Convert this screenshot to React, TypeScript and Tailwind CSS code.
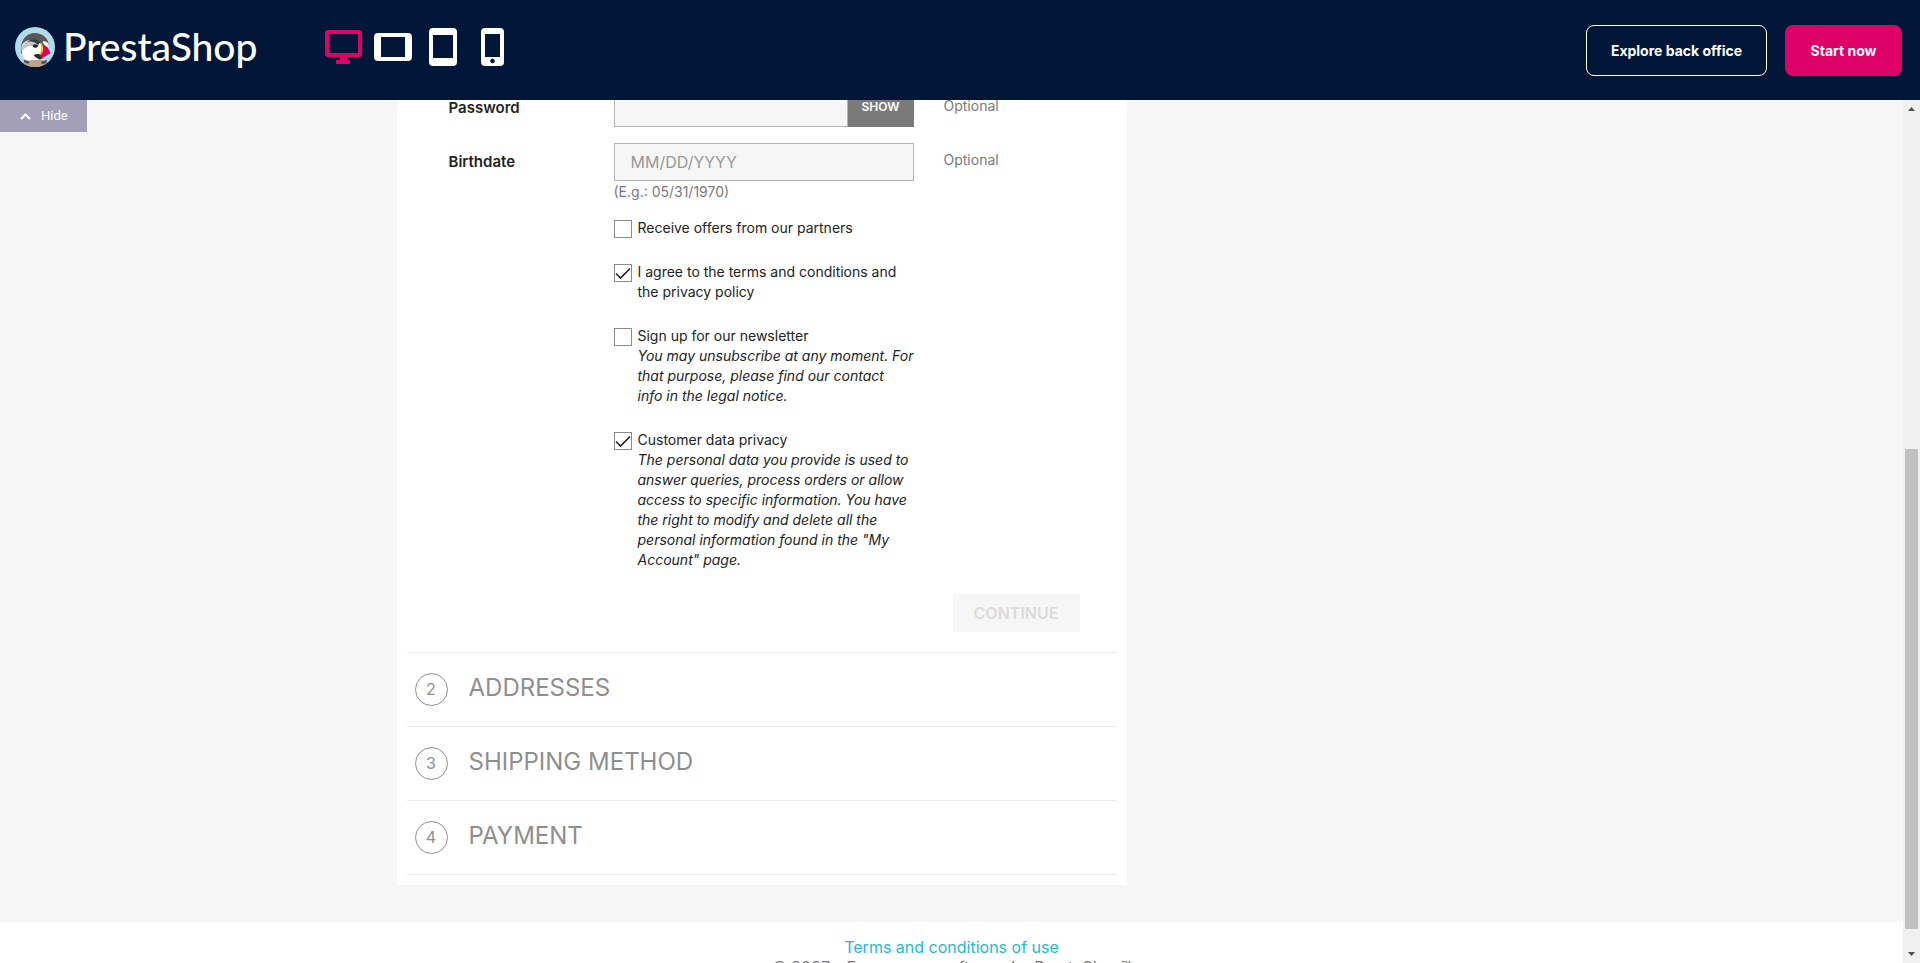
import type { ReactNode } from "react";

function PuffinLogo() {
  return (
    <svg viewBox="0 0 120 120" className="size-10 shrink-0" aria-hidden="true">
      <defs>
        <clipPath id="badge">
          <circle cx="60" cy="60" r="60" />
        </clipPath>
      </defs>
      <g clipPath="url(#badge)">
        <rect width="120" height="120" fill="#b0dcea" />
        <path d="M18 78C14 42 32 18 60 18C82 18 100 34 101 54L96 84L60 104Z" fill="#58585a" />
        <path d="M20 56C28 40 48 36 66 42L78 62L74 96C62 104 42 106 32 98C22 90 18 72 20 56Z" fill="#fff" />
        <path d="M20 62C24 44 44 36 62 42C70 46 72 54 66 60C52 54 34 56 20 72Z" fill="#c4c6c8" />
        <path d="M36 44C52 32 74 36 82 54L74 62C70 50 58 42 36 44Z" fill="#3b3b3d" />
        <path d="M82 44C92 40 102 46 102 62L92 60Z" fill="#f4f4f4" />
        <ellipse cx="61" cy="57" rx="8" ry="5" fill="#1d1d1b" />
        <path d="M73 48C64 66 64 82 80 96C84 88 86 78 84 68C84 58 80 50 73 48Z" fill="#fff" />
        <path d="M75 46C86 52 90 66 82 92C78 88 74 84 74 80C80 70 80 56 75 46Z" fill="#f9c80e" />
        <path d="M56 84C64 80 72 80 82 86L80 96C72 98 62 94 56 84Z" fill="#2b2b2b" />
        <path d="M81 53C94 54 104 66 106 80C98 82 88 88 80 97C76 90 76 84 82 76C86 68 86 60 81 53Z" fill="#df0067" />
        <path d="M28 104C48 98 74 98 94 103L92 120H28Z" fill="#bda587" />
        <path d="M28 98L44 104L40 110L26 106ZM78 104L96 98L94 108L80 112Z" fill="#5b5048" />
      </g>
    </svg>
  );
}

function DesktopIcon() {
  return (
    <svg viewBox="0 0 38 38" className="size-[38px]" fill="currentColor" aria-hidden="true">
      <path
        fillRule="evenodd"
        d="M3 2H34a3 3 0 0 1 3 3V26a3 3 0 0 1-3 3H22v3h3v4H11v-4h4v-3H3a3 3 0 0 1-3-3V5a3 3 0 0 1 3-3ZM4 6V25H33V6Z"
      />
    </svg>
  );
}

function TabletLandscapeIcon() {
  return (
    <svg viewBox="0 0 38 38" className="size-[38px]" fill="currentColor" aria-hidden="true">
      <path fillRule="evenodd" d="M4 5H34a4 4 0 0 1 4 4V29a4 4 0 0 1-4 4H4a4 4 0 0 1-4-4V9a4 4 0 0 1 4-4ZM7 9V29H31V9Z" />
    </svg>
  );
}

function TabletIcon() {
  return (
    <svg viewBox="0 0 28 38" className="h-[38px] w-7" fill="currentColor" aria-hidden="true">
      <path fillRule="evenodd" d="M4 0H24a4 4 0 0 1 4 4V34a4 4 0 0 1-4 4H4a4 4 0 0 1-4-4V4a4 4 0 0 1 4-4ZM4 7V30H24V7Z" />
    </svg>
  );
}

function PhoneIcon() {
  return (
    <svg viewBox="0 0 23 38" className="h-[38px] w-[23px]" fill="currentColor" aria-hidden="true">
      <path
        fillRule="evenodd"
        d="M4 0H19a4 4 0 0 1 4 4V34a4 4 0 0 1-4 4H4a4 4 0 0 1-4-4V4a4 4 0 0 1 4-4ZM4 6V29H19V6ZM11.500 30.700a2.300 2.300 0 1 0 .01 0Z"
      />
    </svg>
  );
}

function Header() {
  return (
    <header className="flex h-[100px] shrink-0 items-center justify-between bg-[#011638] pr-[18px] pl-[15px] text-white">
      <div className="flex items-center pb-[6px]">
        <a href="#home" className="flex items-center gap-2 font-['Lato',sans-serif] text-[39px] leading-10 font-medium">
          <PuffinLogo />
          <span className="w-[195px] pb-[2px]">PrestaShop</span>
        </a>
        <nav className="ml-[67px] flex items-center" aria-label="Preview size">
          <button type="button" aria-label="Desktop" className="text-[#df0067]">
            <DesktopIcon />
          </button>
          <button type="button" aria-label="Tablet landscape" className="ml-[11px]">
            <TabletLandscapeIcon />
          </button>
          <button type="button" aria-label="Tablet portrait" className="ml-[17px]">
            <TabletIcon />
          </button>
          <button type="button" aria-label="Phone" className="ml-6">
            <PhoneIcon />
          </button>
        </nav>
      </div>
      <div className="flex gap-[18px] text-[14px] font-bold">
        <a href="#back-office" className="flex h-[51px] w-[181px] items-center justify-center rounded-lg border border-white pt-[2px]">
          Explore back office
        </a>
        <a href="#start" className="flex h-[51px] w-[117px] items-center justify-center rounded-lg bg-[#df0067] pt-[2px]">
          Start now
        </a>
      </div>
    </header>
  );
}

function FormRow({ id, label, children }: { id: string; label: string; children: ReactNode }) {
  return (
    <div className="grid grid-cols-[165px_300px_1fr]">
      <label htmlFor={id} className="pt-[9px] text-[15px] leading-5 font-semibold">
        {label}
      </label>
      <div>{children}</div>
      <span className="pt-[7px] pl-[30px] text-[#7a7a7a]">Optional</span>
    </div>
  );
}

function CheckRow({ id, label, lines = [], checked = false }: { id: string; label: ReactNode; lines?: string[]; checked?: boolean }) {
  return (
    <div className="flex gap-[6px]">
      <span className="grid h-fit shrink-0 pt-[2px]">
        <input
          id={id}
          type="checkbox"
          defaultChecked={checked}
          className="peer col-start-1 row-start-1 size-[18px] appearance-none border border-[#8c8c8c] bg-white"
        />
        <svg
          viewBox="0 0 18 18"
          className="pointer-events-none invisible col-start-1 row-start-1 size-[18px] peer-checked:visible"
          fill="none"
          stroke="#232323"
          strokeWidth="1.6"
          aria-hidden="true"
        >
          <path d="M2 9.500L6.500 14L16 4.500" />
        </svg>
      </span>
      <label htmlFor={id} className="whitespace-nowrap">
        {label}
        {lines.map((line) => (
          <em key={line} className="block">
            {line}
          </em>
        ))}
      </label>
    </div>
  );
}

function PersonalInformation() {
  return (
    <form className="-mt-[11px] pr-[37px] pb-5 pl-[42px]">
      <FormRow id="password" label="Password">
        <div className="flex h-[38px]">
          <input id="password" type="password" className="min-w-0 flex-1 border border-[#b5b5b5] bg-[#f6f6f6] px-4" />
          <button type="button" className="w-[66px] bg-[#7a7a7a] pb-[2px] text-[12px] font-semibold text-white">
            SHOW
          </button>
        </div>
      </FormRow>
      <div className="h-4" />
      <FormRow id="birthdate" label="Birthdate">
        <input
          id="birthdate"
          type="text"
          placeholder="MM/DD/YYYY"
          className="h-[38px] w-full border border-[#b5b5b5] bg-[#f6f6f6] px-4 text-[16px] placeholder:text-[#999999]"
        />
        <p className="pt-px text-[#7a7a7a]">(E.g.: 05/31/1970)</p>
      </FormRow>
      <div className="mt-4 ml-[165px] flex flex-col gap-6">
        <CheckRow id="offers" label="Receive offers from our partners" />
        <CheckRow
          id="terms"
          checked
          label={
            <>
              I agree to the terms and conditions and
              <br />
              the privacy policy
            </>
          }
        />
        <CheckRow
          id="newsletter"
          label="Sign up for our newsletter"
          lines={["You may unsubscribe at any moment. For", "that purpose, please find our contact", "info in the legal notice."]}
        />
        <CheckRow
          id="privacy"
          checked
          label="Customer data privacy"
          lines={[
            "The personal data you provide is used to",
            "answer queries, process orders or allow",
            "access to specific information. You have",
            "the right to modify and delete all the",
            'personal information found in the "My',
            'Account" page.',
          ]}
        />
      </div>
      <div className="mt-6 flex justify-end">
        <button type="submit" disabled className="h-[38px] w-[127px] bg-[#f6f6f6] text-[16px] font-semibold text-[#dcdcdc]">
          CONTINUE
        </button>
      </div>
    </form>
  );
}

function Step({ number, title }: { number: number; title: string }) {
  return (
    <section className="flex h-[74px] items-start gap-[21px] border-t border-[#ececec] pl-2 text-[#8f8f8f]">
      <span className="mt-5 flex size-[33px] items-center justify-center rounded-full border border-[#8f8f8f] pb-[2px] text-[16px]">
        {number}
      </span>
      <h1 className="pt-5 text-[24px] leading-[30px]">{title}</h1>
    </section>
  );
}

function Scrollbar() {
  return (
    <div className="flex w-[17px] shrink-0 flex-col items-center bg-[#f0f0f0]" aria-hidden="true">
      <svg viewBox="0 0 17 17" className="size-[17px] shrink-0">
        <path d="M5 11L8.500 7L12 11Z" fill="#505050" />
      </svg>
      <div className="flex w-full flex-1 flex-col px-[2px]">
        <div className="flex-[332]" />
        <div className="flex-[480] bg-[#c1c1c1]" />
        <div className="flex-[17]" />
      </div>
      <svg viewBox="0 0 17 17" className="size-[17px] shrink-0">
        <path d="M5 6L8.500 10L12 6Z" fill="#505050" />
      </svg>
    </div>
  );
}

export default function App() {
  return (
    <div className="flex h-screen flex-col overflow-hidden bg-[#f6f6f6] font-['Inter',sans-serif] text-[14px] leading-5 text-[#232323]">
      <Header />
      <div className="relative flex min-h-0 flex-1">
        <button
          type="button"
          className="absolute top-0 left-0 flex h-8 w-[87px] items-center gap-[10px] bg-[#a39fb9] pl-5 font-['Roboto',sans-serif] text-[13px] leading-8 text-white"
        >
          <svg viewBox="0 0 11 8" className="h-2 w-[11px]" fill="none" stroke="currentColor" strokeWidth="2" aria-hidden="true">
            <path d="M1 7L5.500 2.500L10 7" />
          </svg>
          Hide
        </button>
        <div className="min-w-0 flex-1 overflow-hidden">
          <main className="mx-auto max-w-[1140px] px-[15px] pb-[37px]">
            <div className="w-[730px] bg-white px-[10px] pb-[10px]">
              <PersonalInformation />
              <div className="border-b border-[#ececec]">
                <Step number={2} title="ADDRESSES" />
                <Step number={3} title="SHIPPING METHOD" />
                <Step number={4} title="PAYMENT" />
              </div>
            </div>
          </main>
          <footer className="bg-white pt-[15px] text-center text-[16px] leading-5 text-[#7a7a7a]">
            <a href="#terms-of-use" className="block text-[#24b9d7]">
              Terms and conditions of use
            </a>
            <p>© 2027 - Ecommerce software by PrestaShop™</p>
          </footer>
        </div>
        <Scrollbar />
      </div>
    </div>
  );
}
